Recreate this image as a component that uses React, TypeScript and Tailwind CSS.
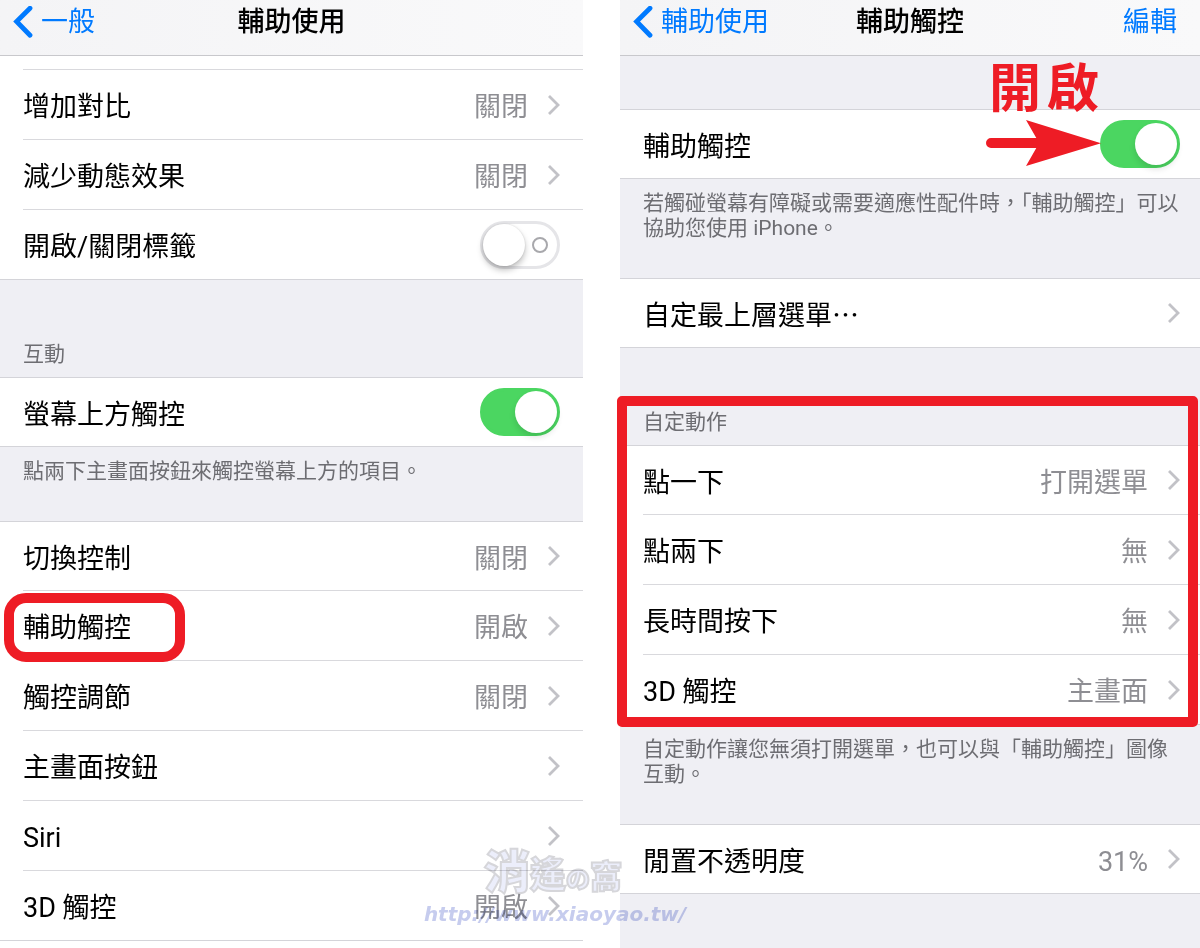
import { ComponentPropsWithRef, ReactNode, useState } from "react";

type ToggleProps = ComponentPropsWithRef<"input">;

const Toggle = ({ defaultChecked = false, ...props }: ToggleProps) => {
	const [on, setOn] = useState(defaultChecked);
	return (
		<span className="relative block h-12 w-20 shrink-0">
			<input
				type="checkbox"
				role="switch"
				checked={on}
				onChange={(e) => setOn(e.target.checked)}
				className="block h-12 w-20 cursor-pointer appearance-none rounded-full border-[3px] border-[#e5e5e8] bg-white checked:border-[#4bd661] checked:bg-[#4bd661]"
				{...props}
			/>
			{!on && (
				<span className="pointer-events-none absolute top-4 right-3 h-4 w-4 rounded-full border-2 border-[#a8a8ac]" />
			)}
			<span
				className={[
					"pointer-events-none absolute top-[3px] h-[42px] w-[42px] rounded-full bg-white",
					on
						? "right-[3px] shadow-[0_4px_6px_rgba(0,0,0,0.12)]"
						: "left-[3px] shadow-[0_4px_6px_rgba(0,0,0,0.25),0_0_2px_rgba(0,0,0,0.15)]",
				].join(" ")}
			/>
		</span>
	);
};

const Chevron = () => (
	<svg
		className="h-5 w-3 shrink-0"
		viewBox="0 0 12 20"
		fill="none"
		stroke="#c2c2c7"
		strokeWidth="2.8"
		aria-hidden="true"
	>
		<path d="M1 1 10 10 1 19" />
	</svg>
);

type RowProps = {
	label: string;
	value?: string;
	children?: ReactNode;
};

// Every row is 70px tall, the hairlines included
const rowClass =
	"group relative h-[70px] border-[#d4d4d9] bg-white pl-[23px] first:border-t last:border-b";
const lineClass =
	"flex h-full w-full items-center border-b border-[#d9d9dd] pr-(--edge) text-left group-last:border-b-0";

const LinkRow = ({ label, value, children }: RowProps) => (
	<li className={rowClass}>
		<button type="button" className={`${lineClass} gap-5`}>
			<span className="flex-1 pt-[5px]">{label}</span>
			{value && <span className="pt-[5px] text-[#8e8e93]">{value}</span>}
			<Chevron />
		</button>
		{children}
	</li>
);

const SwitchRow = ({
	id,
	label,
	on,
	children,
}: RowProps & { id: string; on?: boolean }) => (
	<li className={rowClass}>
		<div className={lineClass}>
			<label htmlFor={id} className="flex-1 pt-[5px]">
				{label}
			</label>
			<Toggle id={id} defaultChecked={on} />
		</div>
		{children}
	</li>
);

const NavBar = ({
	back,
	title,
	action,
}: {
	back: string;
	title: string;
	action?: string;
}) => (
	<header className="grid h-14 grid-cols-[1fr_auto_1fr] items-center border-b border-[#c8c8cc] bg-linear-to-r from-[#f4f4f6] to-[#f9f9fa] px-[13px] pb-3">
		<a href="#" className="flex items-center gap-2 text-[#007aff]">
			<svg
				className="h-8 w-5 shrink-0"
				viewBox="0 0 20 32"
				fill="none"
				stroke="currentColor"
				strokeWidth="4.8"
				strokeLinecap="round"
				aria-hidden="true"
			>
				<path d="M17 2.200 3.600 15.500l13.400 13.700" />
			</svg>
			{back}
		</a>
		<h1 className="font-medium">{title}</h1>
		{action && (
			<button
				type="button"
				className="mr-2.5 justify-self-end text-[#007aff]"
			>
				{action}
			</button>
		)}
	</header>
);

const noteClass = "pr-5 pl-[23px] text-[21px] leading-[25px] text-[#6d6d72]";

const Watermark = () => (
	<div className="pointer-events-none absolute top-[850px] left-[425px] flex w-[260px] flex-col items-center mix-blend-multiply select-none">
		<div className="mr-1 flex items-baseline leading-[44px] font-black text-[#eceefb] [-webkit-text-stroke:2px_#d6d6da]">
			<span className="text-[46px]">消</span>
			<span className="text-[36px]">遙</span>
			<span className="text-[24px]">の</span>
			<span className="text-[32px]">窩</span>
		</div>
		<div className="font-['DejaVu_Sans'] text-[20px] leading-6 font-bold text-[#c6ccee] italic">
			http://www.xiaoyao.tw/
		</div>
	</div>
);

const Accessibility = () => (
	<section className="bg-white [--edge:23px]">
		<NavBar back="一般" title="輔助使用" />
		<ul>
			{/* tail of the row scrolled under the bar */}
			<li className="ml-[23px] h-3.5 border-b border-[#d9d9dd]" />
			<LinkRow label="增加對比" value="關閉" />
			<LinkRow label="減少動態效果" value="關閉" />
			<SwitchRow id="labels" label="開啟/關閉標籤" />
		</ul>
		<h2
			className={`${noteClass} flex h-[97px] items-end bg-[#efeff4] pb-2.5`}
		>
			互動
		</h2>
		<ul>
			<SwitchRow id="reachability" label="螢幕上方觸控" on />
		</ul>
		<p className={`${noteClass} min-h-[74px] bg-[#efeff4] pt-3`}>
			點兩下主畫面按鈕來觸控螢幕上方的項目。
		</p>
		<ul>
			<LinkRow label="切換控制" value="關閉" />
			<LinkRow label="輔助觸控" value="開啟">
				<span className="pointer-events-none absolute top-0.5 left-1 z-10 h-[69px] w-[181px] rounded-[22px] border-10 border-[#ee1c25]" />
			</LinkRow>
			<LinkRow label="觸控調節" value="關閉" />
			<LinkRow label="主畫面按鈕" />
			<LinkRow label="Siri" />
			<LinkRow label="3D 觸控" value="開啟" />
		</ul>
	</section>
);

const AssistiveTouch = () => (
	<section className="bg-[#efeff4] [--edge:20px]">
		<NavBar back="輔助使用" title="輔助觸控" action="編輯" />
		<ul className="pt-[53px]">
			<SwitchRow id="assistive" label="輔助觸控" on>
				<div className="pointer-events-none absolute right-[99px] bottom-[11px] flex flex-col items-end text-[#ee1c25]">
					<span className="mr-0.5 flex gap-1.5 text-[52px] leading-[58px] font-bold">
						<span>開</span>
						<span>啟</span>
					</span>
					<svg
						className="h-12 w-[115px]"
						viewBox="0 0 115 48"
						fill="currentColor"
						aria-hidden="true"
					>
						<path d="M5 19h45.300L40 1l75 23.300L40 47l10.300-18H5a5 5 0 0 1 0-10Z" />
					</svg>
				</div>
			</SwitchRow>
		</ul>
		<p className={`${noteClass} min-h-[99px] pt-3`}>
			若觸碰螢幕有障礙或需要適應性配件時，「輔助觸控」可以協助您使用
			iPhone。
		</p>
		<ul>
			<LinkRow label="自定最上層選單⋯" />
		</ul>
		<div className="relative">
			<h2 className={`${noteClass} flex h-[97px] items-end pb-2.5`}>
				自定動作
			</h2>
			<ul>
				<LinkRow label="點一下" value="打開選單" />
				<LinkRow label="點兩下" value="無" />
				<LinkRow label="長時間按下" value="無" />
				<LinkRow label="3D 觸控" value="主畫面" />
			</ul>
			<span className="pointer-events-none absolute top-12 right-0.5 -bottom-0.5 -left-[3px] z-10 rounded-[5px] border-10 border-[#ee1c25]" />
		</div>
		<p className={`${noteClass} min-h-[99px] pt-3`}>
			自定動作讓您無須打開選單，也可以與「輔助觸控」圖像互動。
		</p>
		<ul>
			<LinkRow label="閒置不透明度" value="31%" />
		</ul>
	</section>
);

export const App = () => {
	return (
		<main
			lang="zh-Hant"
			className="relative grid min-h-screen grid-cols-[583fr_580fr] gap-[37px] bg-white font-[Roboto,'Noto_Sans_CJK_TC',sans-serif] text-[27px] leading-10 text-black"
		>
			<Accessibility />
			<AssistiveTouch />
			<Watermark />
		</main>
	);
};
export default App;
